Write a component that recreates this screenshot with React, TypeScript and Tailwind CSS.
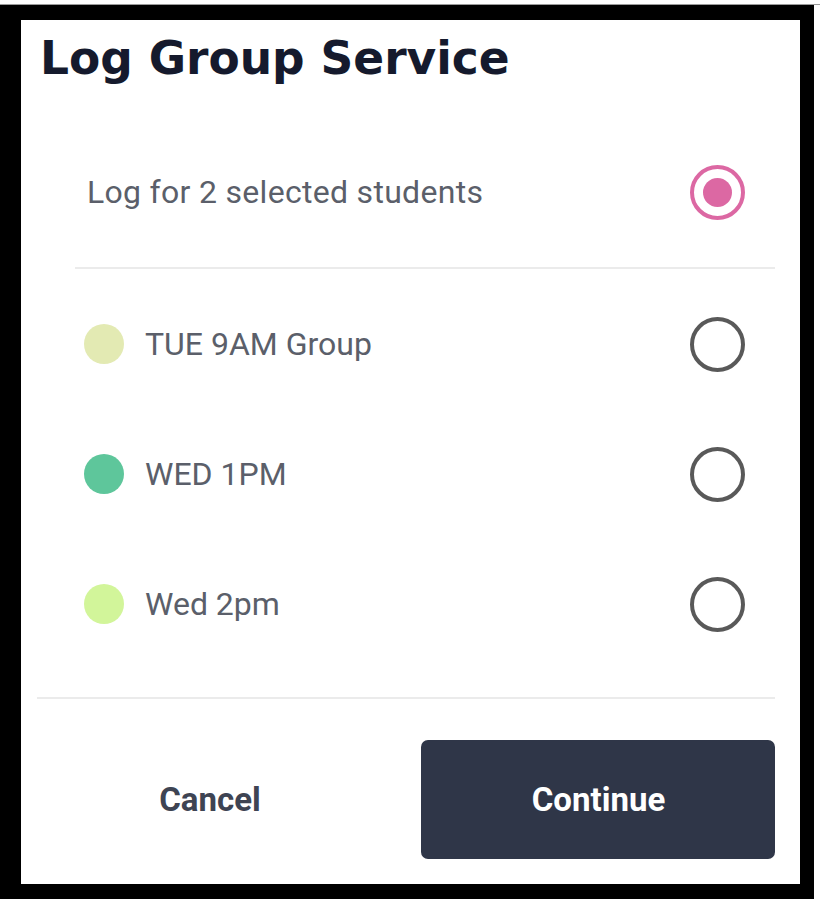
import React, { useState } from "react"

type Group = {
  id: string
  name: string
  color: string
}

const groups: Group[] = [
  { id: "tue9", name: "TUE 9AM Group", color: "bg-[#e3eab3]" },
  { id: "wed1", name: "WED 1PM", color: "bg-[#5ec69b]" },
  { id: "wed2", name: "Wed 2pm", color: "bg-[#d2f59a]" },
]

function Radio({ checked }: { checked: boolean }) {
  return checked ? (
    <span className="flex h-[55px] w-[55px] items-center justify-center rounded-full border-[4px] border-[#dc68a3]">
      <span className="h-[29px] w-[29px] rounded-full bg-[#dc68a3]" />
    </span>
  ) : (
    <span className="block h-[55px] w-[55px] rounded-full border-[4px] border-[#595959]" />
  )
}

export default function App() {
  const [selected, setSelected] = useState("students")

  return (
    <div className="min-h-screen bg-white pt-[4px]" style={{ fontFamily: "Roboto, 'Liberation Sans', sans-serif" }}>
      <div className="border-t border-[#9a9a9a]" />
      <div className="w-[814px] border-b-[15px] border-l-[21px] border-r-[14px] border-t-[15px] border-black">
        <div className="flex h-[864px] flex-col bg-white pl-[16px] pr-[25px]">
          {/* Title */}
          <h1
            className="ml-[3px] mt-[11px] text-[45.5px] font-bold leading-[56px] text-[#151a2d]"
            style={{ fontFamily: "'DejaVu Sans', 'Noto Sans', sans-serif" }}
          >
            Log Group Service
          </h1>

          <div className="ml-[38px] mt-[40px] flex flex-col">
            {/* Selected students */}
            <button
              className="flex h-[130px] items-center justify-between pl-[12px] pr-[30px] text-left"
              onClick={() => setSelected("students")}
            >
              <span className="text-[32px] tracking-[0.3px] text-[#5b5f6a]">Log for 2 selected students</span>
              <Radio checked={selected === "students"} />
            </button>

            <div className="mt-[10px] h-[2px] bg-[#ebebeb]" />

            <div className="mt-[10px] flex flex-col">
              {groups.map((g) => (
                <button
                  key={g.id}
                  className="flex h-[130px] items-center justify-between pl-[9px] pr-[30px] text-left"
                  onClick={() => setSelected(g.id)}
                >
                  <span className="flex items-center gap-[21px]">
                    <span className={`h-[40px] w-[40px] rounded-full ${g.color}`} />
                    <span className="text-[32px] text-[#5b5f6a]">{g.name}</span>
                  </span>
                  <Radio checked={selected === g.id} />
                </button>
              ))}
            </div>
          </div>

          <div className="mt-[28px] h-[2px] bg-[#ebebeb]" />

          {/* Actions */}
          <div className="mt-[41px] flex items-center">
            <button className="w-[346px] text-[33px] font-bold text-[#3e4453]">Cancel</button>
            <button className="ml-[38px] flex h-[119px] flex-1 items-center justify-center rounded-[7px] bg-[#2f3648] pl-[1px] text-[33px] font-bold text-white">
              Continue
            </button>
          </div>
        </div>
      </div>
    </div>
  )
}
